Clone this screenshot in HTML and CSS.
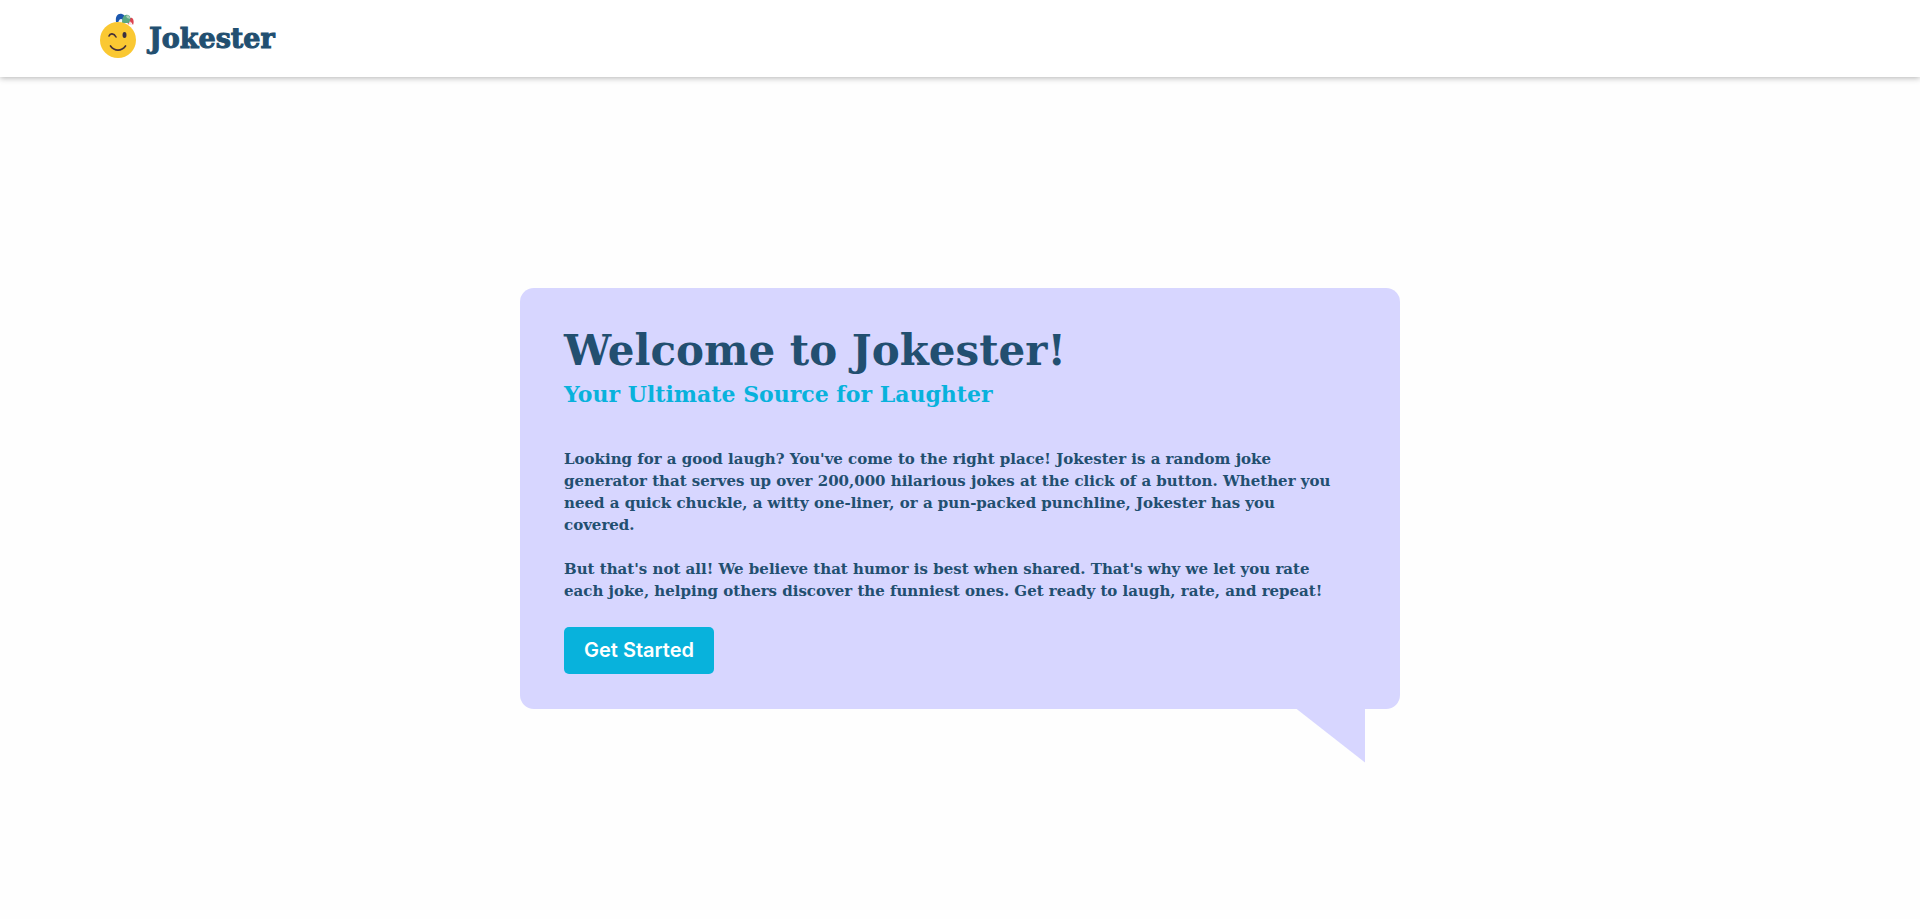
FILE: index.html
```html
<!DOCTYPE html>
<html lang="en">
<head>
<meta charset="utf-8">
<meta name="viewport" content="width=device-width, initial-scale=1">
<title>Jokester</title>
<link rel="stylesheet" href="styles.css">
</head>
<body>
<header class="header">
  <a class="brand" href="#">
    <svg class="brand-icon" viewBox="0 0 36 45" aria-hidden="true">
      <path d="M16 9C15 3 18 0 22 1c3 1 4 4 3 8z" fill="#1c57ae"/>
      <path d="M18 10c1-4 3-5 5-3l1 3z" fill="#eef4fa"/>
      <path d="M28 12c-1-5 2-8 4-7 2 1 2 5 1 7l-2-3z" fill="#dc4350"/>
      <path d="M22 10c0-6 2-9 6-8 3 1 3 4 1 8z" fill="#58a883"/>
      <path d="M26 3c2-2 4 0 4 3l-3-1z" fill="#a9cfb8"/>
      <path d="M28 12l2-4 2 4z" fill="#f6e5e3"/>
      <circle cx="18" cy="27" r="18" fill="#fac832"/>
      <path d="M9 23c1-3 5-3 7 1" fill="none" stroke="#45303a" stroke-width="1.6" stroke-linecap="round"/>
      <ellipse cx="24.500" cy="22" rx="2" ry="3" fill="#3b3040"/>
      <path d="M10.500 33c4 5.500 11 5.500 15 0" fill="none" stroke="#45303a" stroke-width="1.700" stroke-linecap="round"/>
    </svg>
    <span class="brand-name">Jokester</span>
  </a>
</header>
<main class="main">
  <section class="bubble">
    <h1 class="title">Welcome to Jokester!</h1>
    <h2 class="subtitle">Your Ultimate Source for Laughter</h2>
    <p class="text">Looking for a good laugh? You've come to the right place! Jokester is a random joke generator that serves up over 200,000 hilarious jokes at the click of a button. Whether you need a quick chuckle, a witty one-liner, or a pun-packed punchline, Jokester has you covered.</p>
    <p class="text">But that's not all! We believe that humor is best when shared. That's why we let you rate each joke, helping others discover the funniest ones. Get ready to laugh, rate, and repeat!</p>
    <button class="start" type="button">Get Started</button>
  </section>
</main>
</body>
</html>
```
FILE: styles.css
```css
* { box-sizing: border-box; }
body {
  margin: 0;
  min-height: 100vh;
  display: flex;
  flex-direction: column;
  background: #fefefe;
  color: #224f70;
  font-family: "DejaVu Serif", serif;
  font-weight: 700;
}
.header {
  display: flex;
  align-items: center;
  padding: 13px 100px 19px;
  background: #fff;
  box-shadow: 0 1px 6px rgba(0, 0, 0, 0.3);
}
.brand {
  display: flex;
  align-items: center;
  gap: 13px;
  color: inherit;
  text-decoration: none;
}
.brand-icon { width: 36px; height: 45px; }
.brand-name {
  padding-top: 6px;
  font-size: 27px;
  line-height: 36px;
  -webkit-text-stroke: 1px currentColor;
}
.main {
  flex: 1;
  display: flex;
  align-items: center;
  justify-content: center;
  padding: 24px;
}
.bubble {
  position: relative;
  width: 100%;
  max-width: 880px;
  padding: 36px 54px 35px 44px;
  border-radius: 14px;
  background: #d7d6ff;
}
.bubble::after {
  content: "";
  position: absolute;
  top: 100%;
  right: 35px;
  width: 69px;
  height: 54px;
  background: #d7d6ff;
  clip-path: polygon(0 0, 100% 0, 100% 100%);
}
.title { margin: 0; font-size: 42px; line-height: 54px; }
.subtitle { margin: 0 0 38px; color: #08b2dc; font-size: 22px; line-height: 32px; }
.text { margin: 0 0 22px; font-size: 15px; line-height: 22px; }
.start {
  display: block;
  padding: 10px 20px;
  margin-top: 25px;
  border: 0;
  border-radius: 5px;
  background: #08b2dc;
  color: #fff;
  font: 600 20px/27px Inter, sans-serif;
}
```
